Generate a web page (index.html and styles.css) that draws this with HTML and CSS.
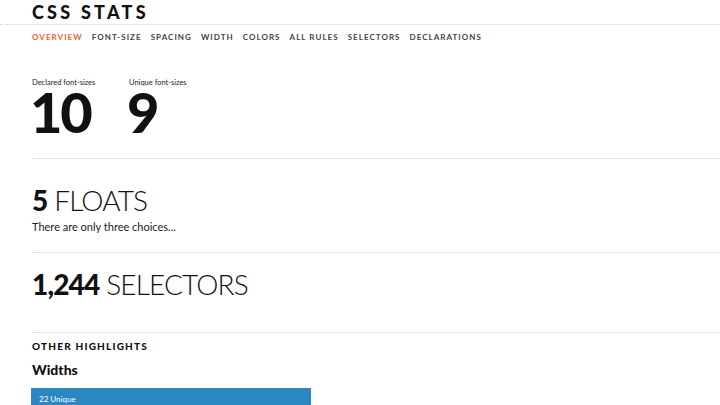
FILE: index.html
```html
<!DOCTYPE html>
<html>
<head>
<meta charset="utf-8">
<link rel="stylesheet" href="styles.css">
</head>
<body>
<header class="header">
  <h1 class="title">CSS STATS</h1>
</header>
<nav class="nav">
  <a class="nav-link active">OVERVIEW</a>
  <a class="nav-link">FONT-SIZE</a>
  <a class="nav-link">SPACING</a>
  <a class="nav-link">WIDTH</a>
  <a class="nav-link">COLORS</a>
  <a class="nav-link">ALL RULES</a>
  <a class="nav-link">SELECTORS</a>
  <a class="nav-link">DECLARATIONS</a>
</nav>
<main class="main">
  <section class="section stats">
    <div class="stat">
      <div class="stat-label">Declared font-sizes</div>
      <div class="stat-value">10</div>
    </div>
    <div class="stat">
      <div class="stat-label">Unique font-sizes</div>
      <div class="stat-value">9</div>
    </div>
  </section>
  <section class="section floats">
    <h2 class="big"><b>5</b> FLOATS</h2>
    <p class="note">There are only three choices...</p>
  </section>
  <section class="section selectors">
    <h2 class="big"><b>1,244</b> SELECTORS</h2>
  </section>
  <section class="highlights">
    <h3 class="kicker">OTHER HIGHLIGHTS</h3>
    <h4 class="sub">Widths</h4>
    <div class="bar" style="width:280px"><span class="bar-label">22 Unique</span></div>
  </section>
</main>
</body>
</html>
```
FILE: styles.css
```css
html, body {
  margin: 0;
  padding: 0;
  background: #fff;
  color: #111;
  font-family: "Lato", "Noto Sans", sans-serif;
}
.header {
  height: 25px;
  box-sizing: border-box;
  padding: 1px 32px 0;
  border-bottom: 1px dotted #d4d4d4;
}
.title {
  margin: 0;
  font-size: 18px;
  line-height: 22px;
  font-weight: 900;
  letter-spacing: 0.18em;
  color: #111;
}
.nav {
  display: flex;
  gap: 9px;
  padding: 2px 32px 0;
  height: 20px;
  align-items: center;
}
.nav-link {
  font-size: 8px;
  font-weight: 700;
  letter-spacing: 0.13em;
  color: #444;
}
.nav-link.active {
  color: #f2603a;
}
.main {
  margin-left: 32px;
}
.section {
  border-bottom: 1px dotted #d4d4d4;
}
.stats {
  display: flex;
  padding-top: 30px;
  height: 81px;
}
.stat {
  width: 97px;
}
.stat-label {
  font-size: 7.5px;
  line-height: 12px;
  color: #222;
}
.stat-value {
  font-size: 56px;
  line-height: 46px;
  font-weight: 900;
  letter-spacing: -0.04em;
  margin-top: 0;
  margin-left: -2px;
}
.big {
  margin: 0;
  font-size: 28px;
  line-height: 32px;
  font-weight: 300;
  letter-spacing: -0.03em;
  color: #111;
}
.big b {
  font-weight: 900;
}
.floats {
  padding-top: 25px;
  height: 68px;
}
.note {
  margin: 4px 0 0;
  font-size: 11px;
  line-height: 14px;
  color: #222;
}
.selectors {
  padding-top: 15px;
  height: 64px;
}
.highlights {
  padding-top: 6px;
}
.kicker {
  margin: 0;
  font-size: 10px;
  line-height: 14px;
  font-weight: 900;
  letter-spacing: 0.12em;
}
.sub {
  margin: 8px 0 0;
  font-size: 14px;
  line-height: 18px;
  font-weight: 900;
}
.bar {
  margin-top: 9px;
  margin-left: -1px;
  height: 24px;
  background: #2b87c2;
  box-sizing: border-box;
  padding: 6px 8px;
  font-size: 8px;
  line-height: 10px;
}
.bar-label {
  color: #fff;
}
```
